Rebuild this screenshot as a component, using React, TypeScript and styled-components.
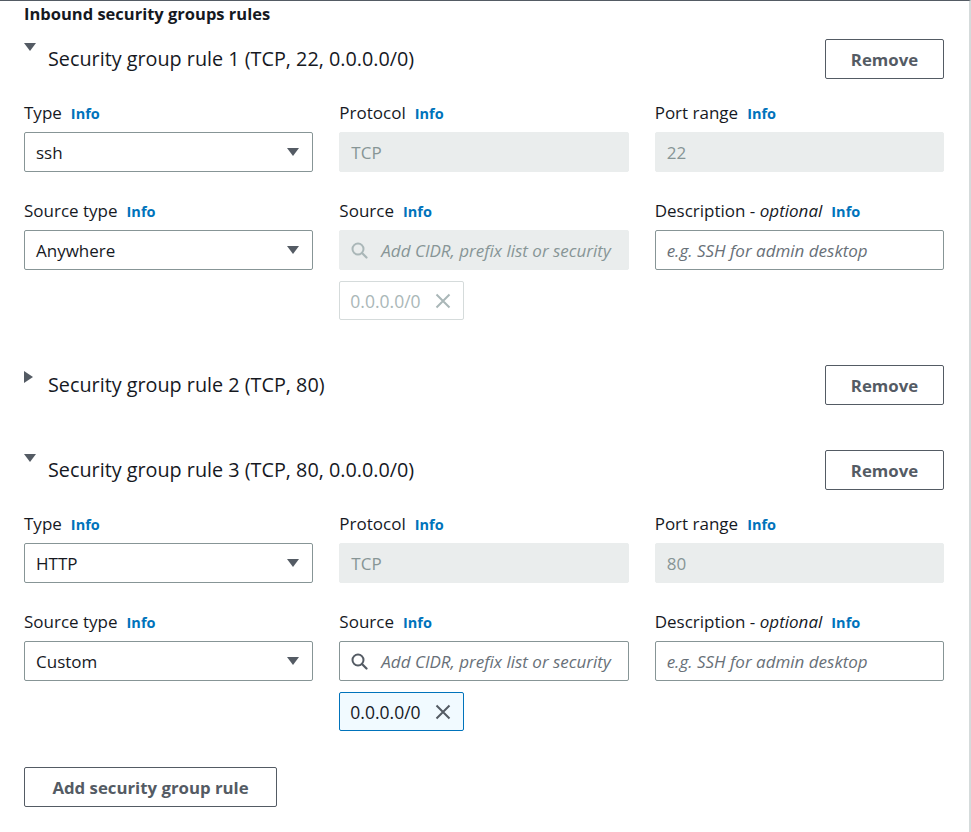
import React, { FC } from 'react';
import styled, { createGlobalStyle } from 'styled-components';

const GlobalStyle = createGlobalStyle`
  body {
    margin: 0;
    background: #ffffff;
    font-family: "Open Sans", "Noto Sans", Arial, sans-serif;
    color: #16191f;
  }
`

const Panel = styled.div`
  box-sizing: border-box;
  width: 971px;
  min-height: 832px;
  border-top: 1px solid #545b64;
  border-right: 2px solid #d5dbdb;
  padding: 3px 25px 24px 24px;
`

const Heading = styled.h3`
  margin: 0 0 15px 0;
  height: 20px;
  font-size: 16.5px;
  line-height: 20px;
  font-weight: 700;
  color: #16191f;
`

const Rule = styled.section`
  margin-bottom: 45px;
  &:last-of-type {
    margin-bottom: 36px;
  }
`

const RuleHeader = styled.div`
  display: flex;
  align-items: center;
  justify-content: space-between;
  height: 40px;
`

const RuleTitle = styled.div`
  display: flex;
  align-items: flex-start;
  gap: 12px;
  font-size: 19.8px;
  line-height: 26px;
  color: #16191f;
`

const Caret = styled.span<{ open?: boolean }>`
  display: flex;
  align-items: flex-start;
  width: 12px;
  margin-top: ${({ open }) => (open ? '-3px' : '-1px')};
`

const Button = styled.button<{ wide?: boolean }>`
  box-sizing: border-box;
  height: 40px;
  width: ${({ wide }) => (wide ? '253px' : '119px')};
  border: 1px solid #545b64;
  border-radius: 2px;
  background: #ffffff;
  color: #545b64;
  font-family: "Open Sans", "Noto Sans", Arial, sans-serif;
  font-size: 16.8px;
  font-weight: 700;
  cursor: pointer;
`

const Grid = styled.div`
  display: grid;
  grid-template-columns: repeat(3, 1fr);
  column-gap: 26px;
  row-gap: 27px;
  margin-top: 22px;
`

const Field = styled.div`
  display: flex;
  flex-direction: column;
  min-width: 0;
`

const Label = styled.label`
  display: block;
  height: 20px;
  padding-top: 2px;
  font-size: 17px;
  line-height: 20px;
  color: #16191f;
  margin-bottom: 9px;
  white-space: nowrap;
  em {
    font-style: italic;
  }
`

const Info = styled.a`
  margin-left: 9px;
  font-size: 14.5px;
  line-height: 20px;
  font-weight: 700;
  color: #0073bb;
  text-decoration: none;
`

const Box = styled.div<{ disabled?: boolean }>`
  box-sizing: border-box;
  display: flex;
  align-items: center;
  gap: 13px;
  height: 40px;
  padding: 0 13px 0 11px;
  border-radius: 2px;
  border: 1px solid ${({ disabled }) => (disabled ? '#eaeded' : '#879596')};
  background: ${({ disabled }) => (disabled ? '#eaeded' : '#ffffff')};
  color: ${({ disabled }) => (disabled ? '#879596' : '#16191f')};
  font-size: 17px;
  overflow: hidden;
  white-space: nowrap;
  svg {
    flex-shrink: 0;
  }
`

const Value = styled.span`
  flex: 1;
`

const Placeholder = styled.span<{ disabled?: boolean }>`
  font-style: italic;
  color: ${({ disabled }) => (disabled ? '#879596' : '#687078')};
  white-space: nowrap;
`

const Token = styled.div<{ active?: boolean }>`
  box-sizing: border-box;
  display: flex;
  align-items: center;
  justify-content: space-between;
  width: 125px;
  height: 39px;
  margin-top: 11px;
  padding: 0 12px 0 10px;
  border-radius: 2px;
  border: 1px solid ${({ active }) => (active ? '#0073bb' : '#d5dbdb')};
  background: ${({ active }) => (active ? '#f1faff' : '#ffffff')};
  color: ${({ active }) => (active ? '#16191f' : '#aab7b8')};
  font-size: 17.5px;
  svg {
    flex-shrink: 0;
  }
`

const CaretDown: FC<{ color?: string }> = ({ color = '#545b64' }) => (
  <svg width="12" height="8" viewBox="0 0 12 8">
    <path d="M0 0 L12 0 L6 8 Z" fill={color} />
  </svg>
)

const CaretRight = () => (
  <svg width="10" height="12" viewBox="0 0 10 12">
    <path d="M0 0 L9 6 L0 12 Z" fill="#545b64" />
  </svg>
)

const SearchIcon: FC<{ color: string }> = ({ color }) => (
  <svg width="17" height="17" viewBox="0 0 17 17" fill="none">
    <circle cx="7" cy="7" r="5.5" stroke={color} strokeWidth="2" />
    <path d="M11 11 L15.5 15.5" stroke={color} strokeWidth="2.2" strokeLinecap="round" />
  </svg>
)

const CloseIcon: FC<{ color: string }> = ({ color }) => (
  <svg width="16" height="16" viewBox="0 0 16 16" fill="none">
    <path d="M1.5 1.5 L14.5 14.5 M14.5 1.5 L1.5 14.5" stroke={color} strokeWidth="2" />
  </svg>
)

interface IRule {
  title: string;
  open: boolean;
  type?: string;
  port?: string;
  sourceType?: string;
  locked?: boolean;
}

const rules: IRule[] = [
  { title: 'Security group rule 1 (TCP, 22, 0.0.0.0/0)', open: true, type: 'ssh', port: '22', sourceType: 'Anywhere', locked: true },
  { title: 'Security group rule 2 (TCP, 80)', open: false },
  { title: 'Security group rule 3 (TCP, 80, 0.0.0.0/0)', open: true, type: 'HTTP', port: '80', sourceType: 'Custom', locked: false },
]

const FieldLabel: FC<{ text: string; optional?: boolean }> = ({ text, optional }) => (
  <Label>
    {text}
    {optional && <> <em>optional</em></>}
    <Info href="#">Info</Info>
  </Label>
)

const RuleSection: FC<{ rule: IRule }> = ({ rule }) => {
  const { title, open, type, port, sourceType, locked } = rule;
  return (
    <Rule>
      <RuleHeader>
        <RuleTitle>
          <Caret open={open}>{open ? <CaretDown /> : <CaretRight />}</Caret>
          {title}
        </RuleTitle>
        <Button>Remove</Button>
      </RuleHeader>
      {open && (
        <Grid>
          <Field>
            <FieldLabel text="Type" />
            <Box>
              <Value>{type}</Value>
              <CaretDown />
            </Box>
          </Field>
          <Field>
            <FieldLabel text="Protocol" />
            <Box disabled>TCP</Box>
          </Field>
          <Field>
            <FieldLabel text="Port range" />
            <Box disabled>{port}</Box>
          </Field>
          <Field>
            <FieldLabel text="Source type" />
            <Box>
              <Value>{sourceType}</Value>
              <CaretDown />
            </Box>
          </Field>
          <Field>
            <FieldLabel text="Source" />
            <Box disabled={locked}>
              <SearchIcon color={locked ? '#aab7b8' : '#545b64'} />
              <Placeholder disabled={locked}>Add CIDR, prefix list or security</Placeholder>
            </Box>
            <Token active={!locked}>
              0.0.0.0/0
              <CloseIcon color={locked ? '#aab7b8' : '#545b64'} />
            </Token>
          </Field>
          <Field>
            <FieldLabel text="Description -" optional />
            <Box>
              <Placeholder>e.g. SSH for admin desktop</Placeholder>
            </Box>
          </Field>
        </Grid>
      )}
    </Rule>
  );
};

const App: FC = () => (
  <>
    <GlobalStyle />
    <Panel>
      <Heading>Inbound security groups rules</Heading>
      {rules.map((rule) => (
        <RuleSection key={rule.title} rule={rule} />
      ))}
      <Button wide>Add security group rule</Button>
    </Panel>
  </>
)

export default App;
